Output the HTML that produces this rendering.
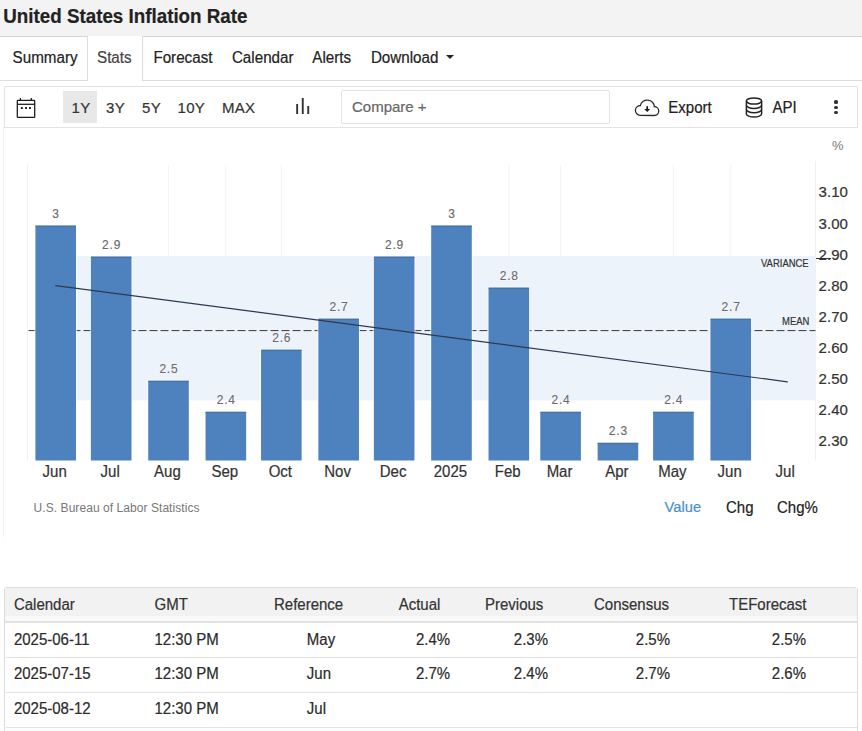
<!DOCTYPE html>
<html><head><meta charset="utf-8"><style>
html,body{margin:0;padding:0;background:#fff;width:862px;height:731px;overflow:hidden;position:relative;}
body{font-family:"Liberation Sans",sans-serif;}
.t{position:absolute;line-height:1;white-space:nowrap;-webkit-text-stroke:0.2px currentColor;}
</style></head><body>
<div style="position:absolute;left:0;top:0;width:862px;height:36px;background:#f3f3f3;border-bottom:1px solid #d6d6d6;"></div>
<div class="t" style="left:3.3px;top:8.09px;font-size:18.8px;color:#222;font-weight:bold;transform:scale(1.0,1.04);transform-origin:0px 15.91px;">United States Inflation Rate</div>

<div style="position:absolute;left:0;top:80px;width:862px;height:1px;background:#dddddd;"></div>
<div style="position:absolute;left:87px;top:36px;width:54px;height:45px;background:#fff;border-left:1px solid #dddddd;border-right:1px solid #dddddd;"></div>
<div class="t" style="left:12.6px;top:49.83px;font-size:15.2px;color:#222;font-weight:normal;transform:scale(1.0,1.04);transform-origin:0px 12.87px;">Summary</div>

<div class="t" style="left:97px;top:49.83px;font-size:15.2px;color:#444;font-weight:normal;transform:scale(1.0,1.04);transform-origin:0px 12.87px;">Stats</div>

<div class="t" style="left:153.4px;top:49.83px;font-size:15.2px;color:#222;font-weight:normal;transform:scale(1.0,1.04);transform-origin:0px 12.87px;">Forecast</div>

<div class="t" style="left:231.9px;top:49.83px;font-size:15.2px;color:#222;font-weight:normal;transform:scale(1.0,1.04);transform-origin:0px 12.87px;">Calendar</div>

<div class="t" style="left:312.3px;top:49.83px;font-size:15.2px;color:#222;font-weight:normal;transform:scale(1.0,1.04);transform-origin:0px 12.87px;">Alerts</div>

<div class="t" style="left:370.9px;top:49.83px;font-size:15.2px;color:#222;font-weight:normal;transform:scale(1.0,1.04);transform-origin:0px 12.87px;">Download</div>

<div style="position:absolute;left:446px;top:55px;width:0;height:0;border-left:4px solid transparent;border-right:4px solid transparent;border-top:4px solid #222;"></div>
<div style="position:absolute;left:4px;top:86px;width:852px;height:40px;border:1px solid #e3e3e3;background:#fff;"></div>
<div style="position:absolute;left:63px;top:91px;width:34px;height:31.5px;background:#e8e8e8;"></div>
<div class="t" style="left:71.6px;top:99.60px;font-size:15px;color:#333;font-weight:normal;letter-spacing:0.3px;">1Y</div>

<div class="t" style="left:106px;top:99.60px;font-size:15px;color:#333;font-weight:normal;letter-spacing:0.3px;">3Y</div>

<div class="t" style="left:142px;top:99.60px;font-size:15px;color:#333;font-weight:normal;letter-spacing:0.3px;">5Y</div>

<div class="t" style="left:177.5px;top:99.60px;font-size:15px;color:#333;font-weight:normal;letter-spacing:0.3px;">10Y</div>

<div class="t" style="left:222px;top:99.60px;font-size:15px;color:#333;font-weight:normal;letter-spacing:0.3px;">MAX</div>

<svg style="position:absolute;left:16px;top:97px" width="22" height="22" viewBox="0 0 22 22" fill="none" stroke="#1a1a1a" stroke-width="1.25">
<rect x="1.3" y="3.3" width="17.4" height="17" rx="0.6"/>
<line x1="1.3" y1="7.3" x2="18.7" y2="7.3"/>
<line x1="4.4" y1="1" x2="4.4" y2="4"/><line x1="15.3" y1="1" x2="15.3" y2="4"/>
<rect x="4.9" y="10.1" width="1.9" height="1.9" fill="#1a1a1a" stroke="none"/>
<rect x="9.1" y="10.1" width="1.9" height="1.9" fill="#1a1a1a" stroke="none"/>
<rect x="13.0" y="10.1" width="1.9" height="1.9" fill="#1a1a1a" stroke="none"/>
</svg>
<svg style="position:absolute;left:294px;top:98px" width="18" height="18" viewBox="0 0 18 18" fill="#333">
<rect x="2.2" y="6" width="1.9" height="10"/><rect x="7.8" y="0" width="1.9" height="16"/><rect x="13.3" y="8" width="1.9" height="8"/>
</svg>
<div style="position:absolute;left:341px;top:90px;width:267px;height:32.3px;border:1px solid #e3e3e3;border-radius:2px;background:#fff;"></div>
<div class="t" style="left:352px;top:99.10px;font-size:15px;color:#666;font-weight:normal;">Compare +</div>

<svg style="position:absolute;left:0;top:0" width="862" height="140">
<path d="M640.2 115.3 A4.9 4.9 0 0 1 640.37 105.5 A7 6.2 0 0 1 654.3 106.5 A4.5 4.5 0 0 1 654.2 115.5 Z" fill="none" stroke="#2a2a2a" stroke-width="1.3"/>
<line x1="647.2" y1="106.2" x2="647.2" y2="110" stroke="#1a1a1a" stroke-width="1.7"/>
<path d="M644.2 109.1 L650.2 109.1 L647.2 112.1 Z" fill="#1a1a1a"/>
</svg>
<div class="t" style="left:668.3px;top:99.80px;font-size:15px;color:#222;font-weight:normal;transform:scale(1.0,1.04);transform-origin:0px 12.70px;">Export</div>

<svg style="position:absolute;left:744px;top:96px" width="20" height="24" viewBox="0 0 20 24" fill="none" stroke="#222" stroke-width="1.5">
<ellipse cx="10" cy="5" rx="7.6" ry="3.1"/>
<path d="M2.4 5 V17.9 A7.6 3.1 0 0 0 17.6 17.9 V5"/>
<path d="M2.4 9.3 A7.6 3.1 0 0 0 17.6 9.3"/>
<path d="M2.4 13.6 A7.6 3.1 0 0 0 17.6 13.6"/>
</svg>
<div class="t" style="left:772.5px;top:99.80px;font-size:15px;color:#222;font-weight:normal;transform:scale(1.0,1.04);transform-origin:0px 12.70px;">API</div>

<div style="position:absolute;left:834.4px;top:100.4px;width:3.2px;height:3.2px;border-radius:50%;background:#333;"></div>
<div style="position:absolute;left:834.4px;top:105.6px;width:3.2px;height:3.2px;border-radius:50%;background:#333;"></div>
<div style="position:absolute;left:834.4px;top:110.9px;width:3.2px;height:3.2px;border-radius:50%;background:#333;"></div>
<div style="position:absolute;left:3px;top:127px;width:1px;height:410px;background:#f3f3f3;"></div>
<svg style="position:absolute;left:0;top:0" width="862" height="731">
<line x1="168.52" y1="165" x2="168.52" y2="460.5" stroke="#f3f3f3" stroke-width="1"/>
<line x1="225.85" y1="165" x2="225.85" y2="460.5" stroke="#f3f3f3" stroke-width="1"/>
<line x1="281.33" y1="165" x2="281.33" y2="460.5" stroke="#f3f3f3" stroke-width="1"/>
<line x1="508.82" y1="165" x2="508.82" y2="460.5" stroke="#f3f3f3" stroke-width="1"/>
<line x1="560.60" y1="165" x2="560.60" y2="460.5" stroke="#f3f3f3" stroke-width="1"/>
<line x1="673.42" y1="165" x2="673.42" y2="460.5" stroke="#f3f3f3" stroke-width="1"/>
<line x1="730.75" y1="165" x2="730.75" y2="460.5" stroke="#f3f3f3" stroke-width="1"/>
<line x1="27.5" y1="165" x2="27.5" y2="460.5" stroke="#f1f1f1" stroke-width="1"/>
<line x1="815.5" y1="161" x2="815.5" y2="460.5" stroke="#f1f1f1" stroke-width="1"/>
<rect x="55.7" y="256" width="759.8" height="144.4" fill="#edf3fb"/>
<line x1="28.5" y1="330.6" x2="815.5" y2="330.6" stroke="#3a3a3a" stroke-width="1" stroke-dasharray="8,3"/>
<rect x="34.40" y="224.60" width="42.6" height="235.90" fill="#ffffff" opacity="0.7"/>
<rect x="35.40" y="225.60" width="40.6" height="234.90" fill="#4e82bf"/>
<rect x="35.40" y="225.60" width="40.6" height="1.3" fill="#43719f" opacity="0.8"/>
<rect x="89.88" y="255.63" width="42.6" height="204.87" fill="#ffffff" opacity="0.7"/>
<rect x="90.88" y="256.63" width="40.6" height="203.87" fill="#4e82bf"/>
<rect x="90.88" y="256.63" width="40.6" height="1.3" fill="#43719f" opacity="0.8"/>
<rect x="147.22" y="379.75" width="42.6" height="80.75" fill="#ffffff" opacity="0.7"/>
<rect x="148.22" y="380.75" width="40.6" height="79.75" fill="#4e82bf"/>
<rect x="148.22" y="380.75" width="40.6" height="1.3" fill="#43719f" opacity="0.8"/>
<rect x="204.55" y="410.78" width="42.6" height="49.72" fill="#ffffff" opacity="0.7"/>
<rect x="205.55" y="411.78" width="40.6" height="48.72" fill="#4e82bf"/>
<rect x="205.55" y="411.78" width="40.6" height="1.3" fill="#43719f" opacity="0.8"/>
<rect x="260.03" y="348.72" width="42.6" height="111.78" fill="#ffffff" opacity="0.7"/>
<rect x="261.03" y="349.72" width="40.6" height="110.78" fill="#4e82bf"/>
<rect x="261.03" y="349.72" width="40.6" height="1.3" fill="#43719f" opacity="0.8"/>
<rect x="317.37" y="317.69" width="42.6" height="142.81" fill="#ffffff" opacity="0.7"/>
<rect x="318.37" y="318.69" width="40.6" height="141.81" fill="#4e82bf"/>
<rect x="318.37" y="318.69" width="40.6" height="1.3" fill="#43719f" opacity="0.8"/>
<rect x="372.85" y="255.63" width="42.6" height="204.87" fill="#ffffff" opacity="0.7"/>
<rect x="373.85" y="256.63" width="40.6" height="203.87" fill="#4e82bf"/>
<rect x="373.85" y="256.63" width="40.6" height="1.3" fill="#43719f" opacity="0.8"/>
<rect x="430.18" y="224.60" width="42.6" height="235.90" fill="#ffffff" opacity="0.7"/>
<rect x="431.18" y="225.60" width="40.6" height="234.90" fill="#4e82bf"/>
<rect x="431.18" y="225.60" width="40.6" height="1.3" fill="#43719f" opacity="0.8"/>
<rect x="487.52" y="286.66" width="42.6" height="173.84" fill="#ffffff" opacity="0.7"/>
<rect x="488.52" y="287.66" width="40.6" height="172.84" fill="#4e82bf"/>
<rect x="488.52" y="287.66" width="40.6" height="1.3" fill="#43719f" opacity="0.8"/>
<rect x="539.30" y="410.78" width="42.6" height="49.72" fill="#ffffff" opacity="0.7"/>
<rect x="540.30" y="411.78" width="40.6" height="48.72" fill="#4e82bf"/>
<rect x="540.30" y="411.78" width="40.6" height="1.3" fill="#43719f" opacity="0.8"/>
<rect x="596.63" y="441.81" width="42.6" height="18.69" fill="#ffffff" opacity="0.7"/>
<rect x="597.63" y="442.81" width="40.6" height="17.69" fill="#4e82bf"/>
<rect x="597.63" y="442.81" width="40.6" height="1.3" fill="#43719f" opacity="0.8"/>
<rect x="652.12" y="410.78" width="42.6" height="49.72" fill="#ffffff" opacity="0.7"/>
<rect x="653.12" y="411.78" width="40.6" height="48.72" fill="#4e82bf"/>
<rect x="653.12" y="411.78" width="40.6" height="1.3" fill="#43719f" opacity="0.8"/>
<rect x="709.45" y="317.69" width="42.6" height="142.81" fill="#ffffff" opacity="0.7"/>
<rect x="710.45" y="318.69" width="40.6" height="141.81" fill="#4e82bf"/>
<rect x="710.45" y="318.69" width="40.6" height="1.3" fill="#43719f" opacity="0.8"/>
<line x1="55.70" y1="285.56" x2="787.3" y2="381.8" stroke="#2c3a50" stroke-width="1.2" stroke-linecap="round"/>
<line x1="816" y1="258.5" x2="831" y2="258.5" stroke="#333" stroke-width="1"/>
</svg>
<div class="t" style="left:-243.9px;width:600px;text-align:center;top:208.04px;font-size:12px;color:#6a6a6a;font-weight:normal;letter-spacing:0.8px;-webkit-text-stroke:0.15px #6a6a6a;text-shadow:0 0 2px #fff,0 0 1px #fff;transform:scale(1.0,1.04);transform-origin:300px 10.16px;">3</div>

<div class="t" style="left:-188.41643835616438px;width:600px;text-align:center;top:239.07px;font-size:12px;color:#6a6a6a;font-weight:normal;letter-spacing:0.8px;-webkit-text-stroke:0.15px #6a6a6a;text-shadow:0 0 2px #fff,0 0 1px #fff;transform:scale(1.0,1.04);transform-origin:300px 10.16px;">2.9</div>

<div class="t" style="left:-131.08342465753427px;width:600px;text-align:center;top:363.19px;font-size:12px;color:#6a6a6a;font-weight:normal;letter-spacing:0.8px;-webkit-text-stroke:0.15px #6a6a6a;text-shadow:0 0 2px #fff,0 0 1px #fff;transform:scale(1.0,1.04);transform-origin:300px 10.16px;">2.5</div>

<div class="t" style="left:-73.7504109589041px;width:600px;text-align:center;top:394.22px;font-size:12px;color:#6a6a6a;font-weight:normal;letter-spacing:0.8px;-webkit-text-stroke:0.15px #6a6a6a;text-shadow:0 0 2px #fff,0 0 1px #fff;transform:scale(1.0,1.04);transform-origin:300px 10.16px;">2.4</div>

<div class="t" style="left:-18.266849315068555px;width:600px;text-align:center;top:332.16px;font-size:12px;color:#6a6a6a;font-weight:normal;letter-spacing:0.8px;-webkit-text-stroke:0.15px #6a6a6a;text-shadow:0 0 2px #fff,0 0 1px #fff;transform:scale(1.0,1.04);transform-origin:300px 10.16px;">2.6</div>

<div class="t" style="left:39.066164383561556px;width:600px;text-align:center;top:301.13px;font-size:12px;color:#6a6a6a;font-weight:normal;letter-spacing:0.8px;-webkit-text-stroke:0.15px #6a6a6a;text-shadow:0 0 2px #fff,0 0 1px #fff;transform:scale(1.0,1.04);transform-origin:300px 10.16px;">2.7</div>

<div class="t" style="left:94.54972602739718px;width:600px;text-align:center;top:239.07px;font-size:12px;color:#6a6a6a;font-weight:normal;letter-spacing:0.8px;-webkit-text-stroke:0.15px #6a6a6a;text-shadow:0 0 2px #fff,0 0 1px #fff;transform:scale(1.0,1.04);transform-origin:300px 10.16px;">2.9</div>

<div class="t" style="left:151.8827397260273px;width:600px;text-align:center;top:208.04px;font-size:12px;color:#6a6a6a;font-weight:normal;letter-spacing:0.8px;-webkit-text-stroke:0.15px #6a6a6a;text-shadow:0 0 2px #fff,0 0 1px #fff;transform:scale(1.0,1.04);transform-origin:300px 10.16px;">3</div>

<div class="t" style="left:209.21575342465746px;width:600px;text-align:center;top:270.10px;font-size:12px;color:#6a6a6a;font-weight:normal;letter-spacing:0.8px;-webkit-text-stroke:0.15px #6a6a6a;text-shadow:0 0 2px #fff,0 0 1px #fff;transform:scale(1.0,1.04);transform-origin:300px 10.16px;">2.8</div>

<div class="t" style="left:261.000410958904px;width:600px;text-align:center;top:394.22px;font-size:12px;color:#6a6a6a;font-weight:normal;letter-spacing:0.8px;-webkit-text-stroke:0.15px #6a6a6a;text-shadow:0 0 2px #fff,0 0 1px #fff;transform:scale(1.0,1.04);transform-origin:300px 10.16px;">2.4</div>

<div class="t" style="left:318.33342465753424px;width:600px;text-align:center;top:425.25px;font-size:12px;color:#6a6a6a;font-weight:normal;letter-spacing:0.8px;-webkit-text-stroke:0.15px #6a6a6a;text-shadow:0 0 2px #fff,0 0 1px #fff;transform:scale(1.0,1.04);transform-origin:300px 10.16px;">2.3</div>

<div class="t" style="left:373.81698630136987px;width:600px;text-align:center;top:394.22px;font-size:12px;color:#6a6a6a;font-weight:normal;letter-spacing:0.8px;-webkit-text-stroke:0.15px #6a6a6a;text-shadow:0 0 2px #fff,0 0 1px #fff;transform:scale(1.0,1.04);transform-origin:300px 10.16px;">2.4</div>

<div class="t" style="left:431.15px;width:600px;text-align:center;top:301.13px;font-size:12px;color:#6a6a6a;font-weight:normal;letter-spacing:0.8px;-webkit-text-stroke:0.15px #6a6a6a;text-shadow:0 0 2px #fff,0 0 1px #fff;transform:scale(1.0,1.04);transform-origin:300px 10.16px;">2.7</div>

<div class="t" style="left:-245.35px;width:600px;text-align:center;top:463.70px;font-size:15px;color:#333;font-weight:normal;transform:scale(1.0,1.04);transform-origin:300px 12.70px;">Jun</div>

<div class="t" style="left:-189.8664383561644px;width:600px;text-align:center;top:463.70px;font-size:15px;color:#333;font-weight:normal;transform:scale(1.0,1.04);transform-origin:300px 12.70px;">Jul</div>

<div class="t" style="left:-132.53342465753428px;width:600px;text-align:center;top:463.70px;font-size:15px;color:#333;font-weight:normal;transform:scale(1.0,1.04);transform-origin:300px 12.70px;">Aug</div>

<div class="t" style="left:-75.20041095890411px;width:600px;text-align:center;top:463.70px;font-size:15px;color:#333;font-weight:normal;transform:scale(1.0,1.04);transform-origin:300px 12.70px;">Sep</div>

<div class="t" style="left:-19.716849315068544px;width:600px;text-align:center;top:463.70px;font-size:15px;color:#333;font-weight:normal;transform:scale(1.0,1.04);transform-origin:300px 12.70px;">Oct</div>

<div class="t" style="left:37.61616438356157px;width:600px;text-align:center;top:463.70px;font-size:15px;color:#333;font-weight:normal;transform:scale(1.0,1.04);transform-origin:300px 12.70px;">Nov</div>

<div class="t" style="left:93.0997260273972px;width:600px;text-align:center;top:463.70px;font-size:15px;color:#333;font-weight:normal;transform:scale(1.0,1.04);transform-origin:300px 12.70px;">Dec</div>

<div class="t" style="left:150.4327397260273px;width:600px;text-align:center;top:463.70px;font-size:15px;color:#333;font-weight:normal;transform:scale(1.0,1.04);transform-origin:300px 12.70px;">2025</div>

<div class="t" style="left:207.76575342465748px;width:600px;text-align:center;top:463.70px;font-size:15px;color:#333;font-weight:normal;transform:scale(1.0,1.04);transform-origin:300px 12.70px;">Feb</div>

<div class="t" style="left:259.5504109589041px;width:600px;text-align:center;top:463.70px;font-size:15px;color:#333;font-weight:normal;transform:scale(1.0,1.04);transform-origin:300px 12.70px;">Mar</div>

<div class="t" style="left:316.8834246575343px;width:600px;text-align:center;top:463.70px;font-size:15px;color:#333;font-weight:normal;transform:scale(1.0,1.04);transform-origin:300px 12.70px;">Apr</div>

<div class="t" style="left:372.36698630136993px;width:600px;text-align:center;top:463.70px;font-size:15px;color:#333;font-weight:normal;transform:scale(1.0,1.04);transform-origin:300px 12.70px;">May</div>

<div class="t" style="left:429.70000000000005px;width:600px;text-align:center;top:463.70px;font-size:15px;color:#333;font-weight:normal;transform:scale(1.0,1.04);transform-origin:300px 12.70px;">Jun</div>

<div class="t" style="left:485.1835616438357px;width:600px;text-align:center;top:463.70px;font-size:15px;color:#333;font-weight:normal;transform:scale(1.0,1.04);transform-origin:300px 12.70px;">Jul</div>

<div class="t" style="left:818.6px;top:184.47px;font-size:15px;color:#333;font-weight:normal;letter-spacing:0.05px;transform:scale(1.0,1.03);transform-origin:0px 12.70px;">3.10</div>

<div class="t" style="left:818.6px;top:215.50px;font-size:15px;color:#333;font-weight:normal;letter-spacing:0.05px;transform:scale(1.0,1.03);transform-origin:0px 12.70px;">3.00</div>

<div class="t" style="left:818.6px;top:246.53px;font-size:15px;color:#333;font-weight:normal;letter-spacing:0.05px;transform:scale(1.0,1.03);transform-origin:0px 12.70px;">2.90</div>

<div class="t" style="left:818.6px;top:277.56px;font-size:15px;color:#333;font-weight:normal;letter-spacing:0.05px;transform:scale(1.0,1.03);transform-origin:0px 12.70px;">2.80</div>

<div class="t" style="left:818.6px;top:308.59px;font-size:15px;color:#333;font-weight:normal;letter-spacing:0.05px;transform:scale(1.0,1.03);transform-origin:0px 12.70px;">2.70</div>

<div class="t" style="left:818.6px;top:339.62px;font-size:15px;color:#333;font-weight:normal;letter-spacing:0.05px;transform:scale(1.0,1.03);transform-origin:0px 12.70px;">2.60</div>

<div class="t" style="left:818.6px;top:370.65px;font-size:15px;color:#333;font-weight:normal;letter-spacing:0.05px;transform:scale(1.0,1.03);transform-origin:0px 12.70px;">2.50</div>

<div class="t" style="left:818.6px;top:401.68px;font-size:15px;color:#333;font-weight:normal;letter-spacing:0.05px;transform:scale(1.0,1.03);transform-origin:0px 12.70px;">2.40</div>

<div class="t" style="left:818.6px;top:432.71px;font-size:15px;color:#333;font-weight:normal;letter-spacing:0.05px;transform:scale(1.0,1.03);transform-origin:0px 12.70px;">2.30</div>

<div class="t" style="left:832px;top:139.30px;font-size:13px;color:#777;font-weight:normal;-webkit-text-stroke:0;transform:scale(1.0,1.04);transform-origin:0px 11.00px;">%</div>

<div class="t" style="left:761.4px;top:257.89px;font-size:11px;color:#333;font-weight:normal;transform:scaleX(0.86);transform-origin:0 0;">VARIANCE</div>

<div class="t" style="left:781.6px;top:315.59px;font-size:11px;color:#333;font-weight:normal;transform:scaleX(0.86);transform-origin:0 0;">MEAN</div>

<div class="t" style="left:33.6px;top:501.74px;font-size:12px;color:#777;font-weight:normal;letter-spacing:0.06px;-webkit-text-stroke:0;transform:scale(1.0,1.04);transform-origin:0px 10.16px;">U.S. Bureau of Labor Statistics</div>

<div class="t" style="left:664.6px;top:500.06px;font-size:14.7px;color:#4a8fcd;font-weight:normal;transform:scale(1.0,1.04);transform-origin:0px 12.44px;">Value</div>

<div class="t" style="left:726px;top:499.80px;font-size:15px;color:#222;font-weight:normal;transform:scale(1.0,1.04);transform-origin:0px 12.70px;">Chg</div>

<div class="t" style="left:777px;top:499.80px;font-size:15px;color:#222;font-weight:normal;transform:scale(1.0,1.04);transform-origin:0px 12.70px;">Chg%</div>

<div style="position:absolute;left:4px;top:587px;width:852px;height:200px;border:1px solid #dcdcdc;border-radius:3px;"></div>
<div style="position:absolute;left:5px;top:588px;width:852px;height:28px;background:#f2f2f2;"></div>
<div style="position:absolute;left:5px;top:616px;width:852px;height:5px;background:#f9f9f9;"></div>
<div style="position:absolute;left:5px;top:621px;width:852px;height:2px;background:#e2e2e2;"></div>
<div style="position:absolute;left:6px;top:657px;width:851px;height:1px;background:#e3e3e3;"></div>
<div style="position:absolute;left:6px;top:692px;width:851px;height:1px;background:#e3e3e3;"></div>
<div style="position:absolute;left:6px;top:727px;width:851px;height:1px;background:#e3e3e3;"></div>
<div class="t" style="left:13.9px;top:597.30px;font-size:15px;color:#333;font-weight:normal;transform:scale(1.0,1.04);transform-origin:0px 12.70px;">Calendar</div>

<div class="t" style="left:154.5px;top:597.30px;font-size:15px;color:#333;font-weight:normal;transform:scale(1.0,1.04);transform-origin:0px 12.70px;">GMT</div>

<div class="t" style="left:274px;top:597.30px;font-size:15px;color:#333;font-weight:normal;transform:scale(1.0,1.04);transform-origin:0px 12.70px;">Reference</div>

<div class="t" style="left:398.7px;top:597.30px;font-size:15px;color:#333;font-weight:normal;transform:scale(1.0,1.04);transform-origin:0px 12.70px;">Actual</div>

<div class="t" style="left:485px;top:597.30px;font-size:15px;color:#333;font-weight:normal;transform:scale(1.0,1.04);transform-origin:0px 12.70px;">Previous</div>

<div class="t" style="left:594px;top:597.30px;font-size:15px;color:#333;font-weight:normal;transform:scale(1.0,1.04);transform-origin:0px 12.70px;">Consensus</div>

<div class="t" style="left:729px;top:597.30px;font-size:15px;color:#333;font-weight:normal;transform:scale(1.0,1.04);transform-origin:0px 12.70px;">TEForecast</div>

<div class="t" style="left:13.9px;top:632.10px;font-size:15px;color:#2b2b2b;font-weight:normal;transform:scale(1.0,1.04);transform-origin:0px 12.70px;">2025-06-11</div>

<div class="t" style="left:154.5px;top:632.10px;font-size:15px;color:#2b2b2b;font-weight:normal;transform:scale(1.0,1.04);transform-origin:0px 12.70px;">12:30 PM</div>

<div class="t" style="left:306.8px;top:632.10px;font-size:15px;color:#2b2b2b;font-weight:normal;transform:scale(1.0,1.04);transform-origin:0px 12.70px;">May</div>

<div class="t" style="left:-149.8px;width:600px;text-align:right;top:632.10px;font-size:15px;color:#2b2b2b;font-weight:normal;transform:scale(1.0,1.04);transform-origin:600px 12.70px;">2.4%</div>

<div class="t" style="left:-52px;width:600px;text-align:right;top:632.10px;font-size:15px;color:#2b2b2b;font-weight:normal;transform:scale(1.0,1.04);transform-origin:600px 12.70px;">2.3%</div>

<div class="t" style="left:70px;width:600px;text-align:right;top:632.10px;font-size:15px;color:#2b2b2b;font-weight:normal;transform:scale(1.0,1.04);transform-origin:600px 12.70px;">2.5%</div>

<div class="t" style="left:206px;width:600px;text-align:right;top:632.10px;font-size:15px;color:#2b2b2b;font-weight:normal;transform:scale(1.0,1.04);transform-origin:600px 12.70px;">2.5%</div>

<div class="t" style="left:13.9px;top:666.30px;font-size:15px;color:#2b2b2b;font-weight:normal;transform:scale(1.0,1.04);transform-origin:0px 12.70px;">2025-07-15</div>

<div class="t" style="left:154.5px;top:666.30px;font-size:15px;color:#2b2b2b;font-weight:normal;transform:scale(1.0,1.04);transform-origin:0px 12.70px;">12:30 PM</div>

<div class="t" style="left:306.8px;top:666.30px;font-size:15px;color:#2b2b2b;font-weight:normal;transform:scale(1.0,1.04);transform-origin:0px 12.70px;">Jun</div>

<div class="t" style="left:-149.8px;width:600px;text-align:right;top:666.30px;font-size:15px;color:#2b2b2b;font-weight:normal;transform:scale(1.0,1.04);transform-origin:600px 12.70px;">2.7%</div>

<div class="t" style="left:-52px;width:600px;text-align:right;top:666.30px;font-size:15px;color:#2b2b2b;font-weight:normal;transform:scale(1.0,1.04);transform-origin:600px 12.70px;">2.4%</div>

<div class="t" style="left:70px;width:600px;text-align:right;top:666.30px;font-size:15px;color:#2b2b2b;font-weight:normal;transform:scale(1.0,1.04);transform-origin:600px 12.70px;">2.7%</div>

<div class="t" style="left:206px;width:600px;text-align:right;top:666.30px;font-size:15px;color:#2b2b2b;font-weight:normal;transform:scale(1.0,1.04);transform-origin:600px 12.70px;">2.6%</div>

<div class="t" style="left:13.9px;top:701.30px;font-size:15px;color:#2b2b2b;font-weight:normal;transform:scale(1.0,1.04);transform-origin:0px 12.70px;">2025-08-12</div>

<div class="t" style="left:154.5px;top:701.30px;font-size:15px;color:#2b2b2b;font-weight:normal;transform:scale(1.0,1.04);transform-origin:0px 12.70px;">12:30 PM</div>

<div class="t" style="left:306.8px;top:701.30px;font-size:15px;color:#2b2b2b;font-weight:normal;transform:scale(1.0,1.04);transform-origin:0px 12.70px;">Jul</div>

</body></html>
